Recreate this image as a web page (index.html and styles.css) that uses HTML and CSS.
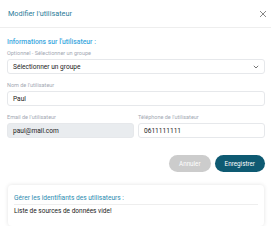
FILE: index.html
```html
<!DOCTYPE html>
<html lang="fr">
<head>
  <meta charset="UTF-8" />
  <title>Modifier l'utilisateur</title>
  <link rel="stylesheet" href="styles.css">
</head>
<body>
  <div class="modal">
    <div class="modal-header">
      <span class="modal-title">Modifier l'utilisateur</span>
      <svg class="close" width="8" height="8" viewBox="0 0 8 8">
        <path d="M1 1 L7 7 M7 1 L1 7" stroke="#888" stroke-width="1" fill="none"/>
      </svg>
    </div>

    <div class="modal-body">
      <div class="section-title">Informations sur l'utilisateur :</div>

      <label class="field-label">Optionnel - Sélectionner un groupe</label>
      <div class="input select">
        <span>Sélectionner un groupe</span>
        <svg width="6" height="4" viewBox="0 0 6 4">
          <path d="M0.8 0.8 L3 3 L5.2 0.8" stroke="#666" stroke-width="0.9" fill="none"/>
        </svg>
      </div>

      <label class="field-label">Nom de l'utilisateur</label>
      <div class="input">Paul</div>

      <div class="row">
        <div class="col">
          <label class="field-label">Email de l'utilisateur</label>
          <div class="input disabled">paul@mail.com</div>
        </div>
        <div class="col">
          <label class="field-label">Téléphone de l'utilisateur</label>
          <div class="input">0611111111</div>
        </div>
      </div>

      <div class="actions">
        <button class="btn btn-cancel">Annuler</button>
        <button class="btn btn-save">Enregistrer</button>
      </div>

      <div class="card">
        <div class="card-title">Gérer les identifiants des utilisateurs :</div>
        <div class="card-text">Liste de sources de données vide!</div>
      </div>
    </div>
  </div>
</body>
</html>
```

FILE: styles.css
```css
body {
  margin: 0;
  font-family: Roboto, "Liberation Sans", sans-serif;
  background-color: #ffffff;
  color: #333333;
}

.modal {
  width: 271px;
}

.modal-header {
  display: flex;
  align-items: center;
  justify-content: space-between;
  height: 28px;
  padding: 0 4px 0 8px;
  border-bottom: 1px solid #eeeeee;
  box-sizing: border-box;
}

.modal-title {
  font-size: 7.3px;
  color: #2b7c99;
}

.close {
  display: block;
}

.modal-body {
  padding: 10px 6px 0 7px;
}

.section-title {
  font-size: 6.8px;
  font-weight: 500;
  color: #3aa7de;
  margin-bottom: 4px;
}

.field-label {
  display: block;
  font-size: 5.5px;
  color: #a3a9b3;
  margin-bottom: 3px;
}

.input {
  height: 15px;
  box-sizing: border-box;
  border: 1px solid #e6e8eb;
  border-radius: 3px;
  padding: 0 5px;
  font-size: 6.6px;
  color: #222222;
  display: flex;
  align-items: center;
  margin-bottom: 8px;
}

.select {
  justify-content: space-between;
}

.disabled {
  background-color: #e9ecef;
}

.row {
  display: flex;
  gap: 4px;
}

.col {
  flex: 1;
}

.actions {
  display: flex;
  justify-content: flex-end;
  gap: 4px;
  margin-top: 9px;
}

.btn {
  font-family: Roboto, "Liberation Sans", sans-serif;
  font-size: 6.3px;
  color: #ffffff;
  height: 17px;
  border: none;
  border-radius: 9px;
  padding: 0 10px;
}

.btn-cancel {
  background-color: #cccccc;
}

.btn-save {
  background-color: #0e5a72;
}

.card {
  margin: 13px 1px 0 1px;
  padding: 9px 6px 11px 6px;
  border-radius: 4px;
  box-shadow: 0 0 4px rgba(0, 0, 0, 0.12);
}

.card-title {
  font-size: 6.6px;
  color: #2b8bb0;
  padding-bottom: 2px;
  border-bottom: 1px solid #eeeeee;
  margin-bottom: 2px;
}

.card-text {
  font-size: 6.5px;
  color: #222222;
}
```
